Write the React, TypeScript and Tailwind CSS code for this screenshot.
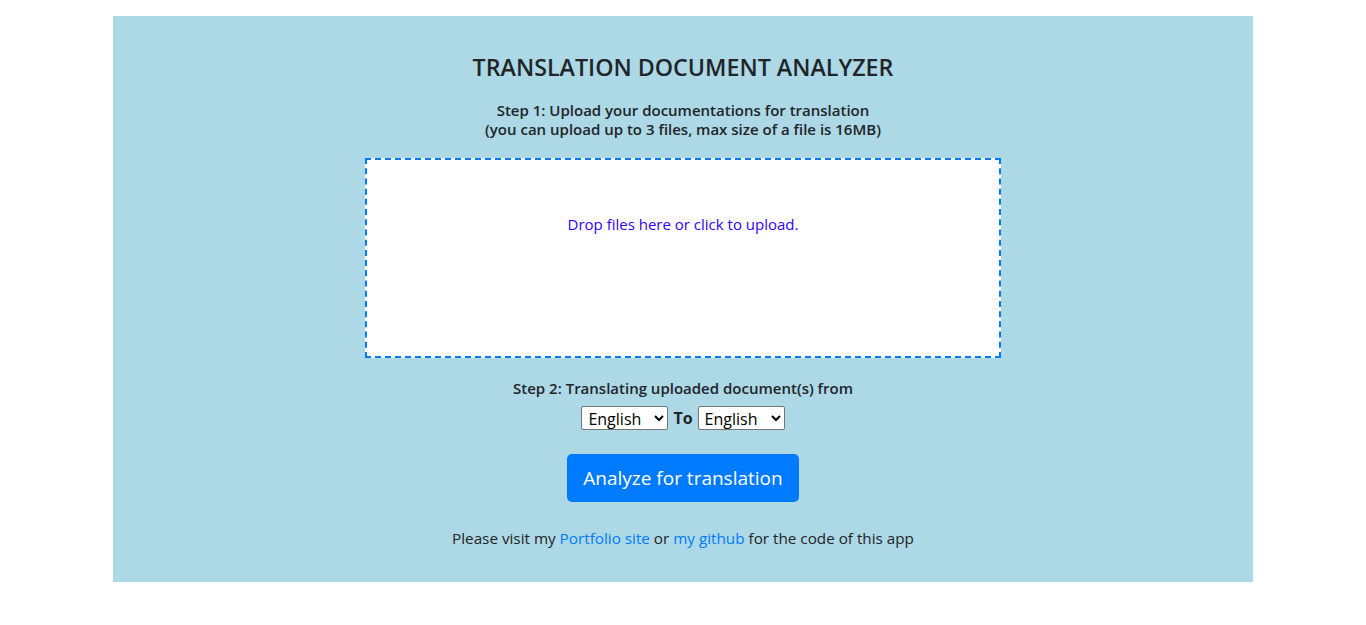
import { useState } from 'react';

const languages = ['English', 'Spanish', 'French', 'German', 'Chinese', 'Japanese'];

const App = () => {
  const [from, setFrom] = useState('English');
  const [to, setTo] = useState('English');

  return (
    <div className="min-h-[625px] bg-white pt-4" style={{ fontFamily: '"Open Sans", "Noto Sans", sans-serif' }}>
      <div className="mx-auto w-[1140px] bg-[#add8e6] pt-[37px] pb-[32px] text-center text-[#212529]">
        <h3 className="text-[23.25px] leading-[29px] font-semibold">TRANSLATION DOCUMENT ANALYZER</h3>
        <div className="mt-[19px] text-[15px] leading-[19px] font-semibold">
          <p>Step 1: Upload your documentations for translation</p>
          <p>(you can upload up to 3 files, max size of a file is 16MB)</p>
        </div>
        <div className="mx-auto mt-[19px] h-[200px] w-[636px] cursor-pointer border-2 border-dashed border-[#007bff] bg-white pt-[54px]">
          <p className="text-[15px] leading-[20px] text-[#3300ff]">Drop files here or click to upload.</p>
        </div>
        <p className="mt-[20px] text-[15px] leading-[20px] font-semibold">
          Step 2: Translating uploaded document(s) from
        </p>
        <div className="mt-[8px] flex items-center justify-center gap-[5px]">
          <select
            value={from}
            onChange={(e) => setFrom(e.target.value)}
            className="h-[24px] w-[87px] rounded-[2px] border border-[#767676] bg-white px-[2px] text-[16px] text-black"
          >
            {languages.map((l) => (
              <option key={l}>{l}</option>
            ))}
          </select>
          <span className="text-[16px] font-bold">To</span>
          <select
            value={to}
            onChange={(e) => setTo(e.target.value)}
            className="h-[24px] w-[87px] rounded-[2px] border border-[#767676] bg-white px-[2px] text-[16px] text-black"
          >
            {languages.map((l) => (
              <option key={l}>{l}</option>
            ))}
          </select>
        </div>
        <button className="mt-[24px] h-[48px] w-[232px] rounded-[5px] bg-[#007bff] text-[19px] text-white">
          Analyze for translation
        </button>
        <p className="mt-[24px] text-[15.25px] leading-[24px]">
          Please visit my <a href="#" className="text-[#007bff]">Portfolio site</a> or{' '}
          <a href="#" className="text-[#007bff]">my github</a> for the code of this app
        </p>
      </div>
    </div>
  );
};

export default App;
